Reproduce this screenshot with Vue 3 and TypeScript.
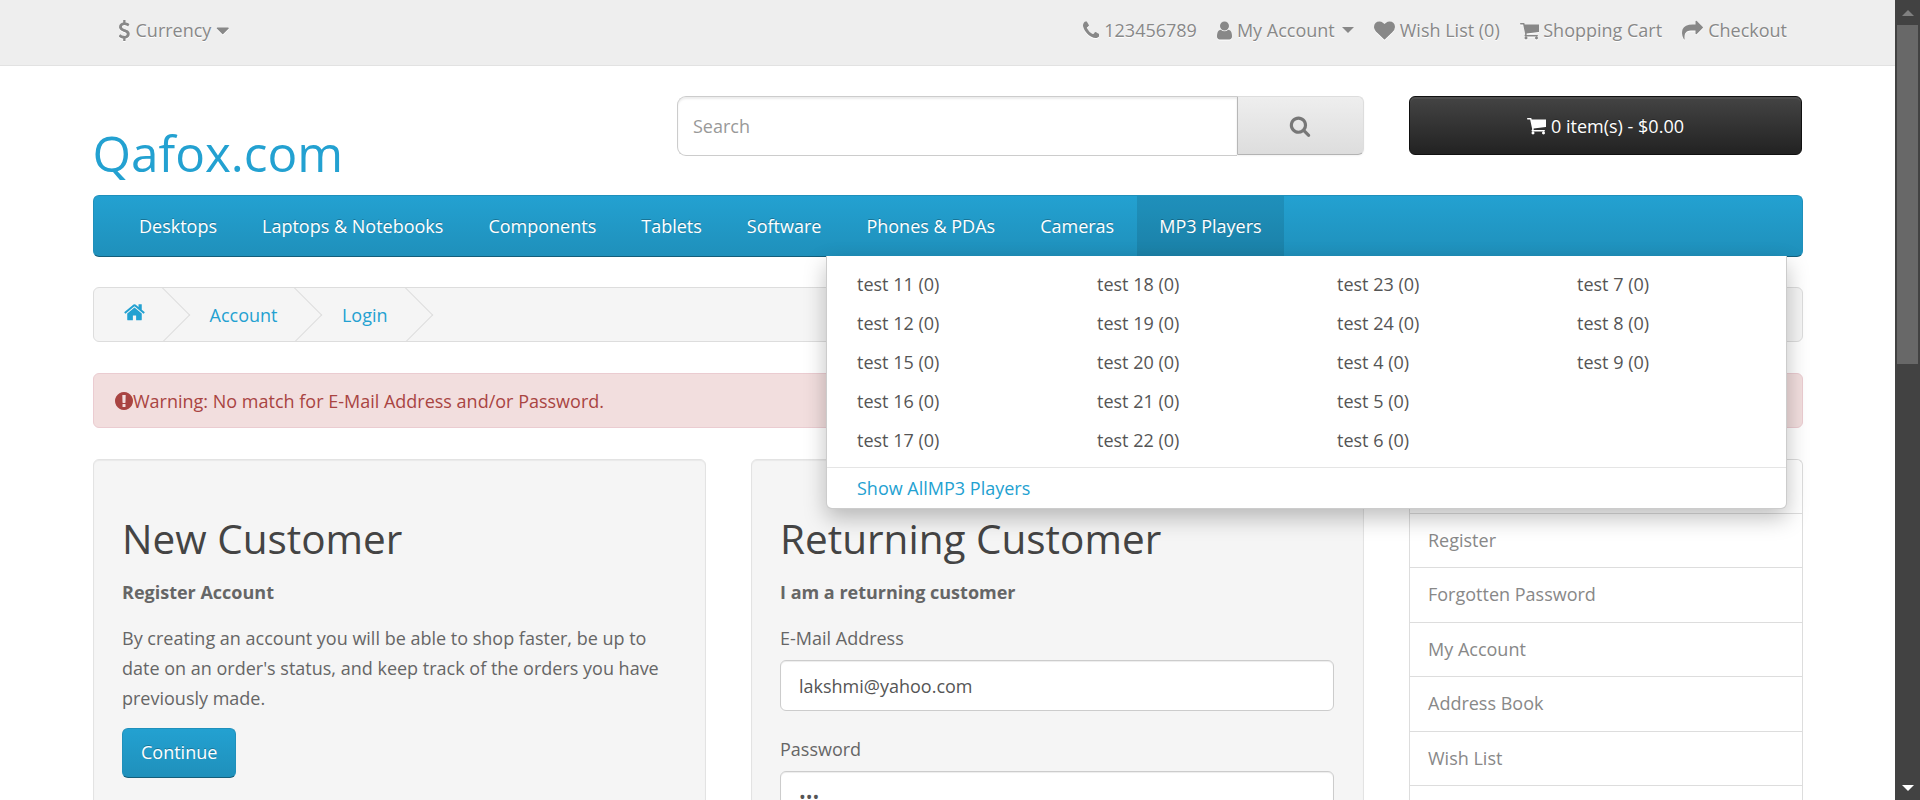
<script setup lang="ts">
const icons: Record<string, string> = {
  usd: 'M1362 1185q0 153-99.5 263.5t-258.5 136.5v175q0 14-9 23t-23 9h-135q-13 0-22.5-9.5t-9.5-22.5v-175q-66-9-127.5-31t-101.5-44.5-74-48-46.5-37.5-17.5-18q-17-21-2-41l103-135q7-10 23-12 15-2 24 9l2 2q113 99 243 125 37 8 74 8 81 0 142.5-43t61.5-122q0-28-15-53t-33.5-42-58.5-37.5-66-32-80-32.5q-39-16-61.5-25t-61.5-26.5-62.5-31-56.5-35.5-53.5-42.5-43.5-49-35.5-58-21-66.5-8.5-78q0-138 98-242t255-134v-180q0-13 9.5-22.5t22.5-9.5h135q14 0 23 9t9 23v176q57 6 110.5 23t87 33.5 63.5 37.5 39 29 15 14q17 18 5 38l-81 146q-8 15-23 16-14 3-27-7-3-3-14.5-12t-39-26.5-58.5-32-74.5-26-85.5-11.5q-95 0-155 43t-60 111q0 26 8.5 48t29.5 41.5 39.5 33 56 31 60.5 27 70 27.5q53 20 81 31.5t76 35 75.5 42.5 62 50 53 63.5 31.5 76.5 13 94z',
  caret: 'M1408 704q0 26-19 45l-448 448q-19 19-45 19t-45-19l-448-448q-19-19-19-45t19-45 45-19h896q26 0 45 19t19 45z',
  phone: 'M1600 1240q0 27-10 70.5t-21 68.5q-21 50-122 106-94 51-186 51-27 0-53-3.5t-57.5-12.5-47-14.5-55.5-20.5-49-18q-98-35-175-83-127-79-264-216t-216-264q-48-77-83-175-3-9-18-49t-20.5-55.5-14.5-47-12.5-57.5-3.5-53q0-92 51-186 56-101 106-122 25-11 68.5-21t70.5-10q14 0 21 3 18 6 53 76 11 19 30 54t35 63.5 31 53.5q3 4 17.5 25t21.5 35.5 7 28.5q0 20-28.5 50t-62 55-62 53-28.5 46q0 9 5 22.5t8.5 20.5 14 24 11.5 19q76 137 174 235t235 174q2 1 19 11.5t24 14 20.5 8.5 22.5 5q18 0 46-28.5t53-62 55-62 50-28.5q14 0 28.5 7t35.5 21.5 25 17.5q25 15 53.5 31t63.5 35 54 30q70 35 76 53 3 7 3 21z',
  user: 'M1536 1399q0 109-62.5 187t-150.5 78h-854q-88 0-150.5-78t-62.5-187q0-85 8.5-160.5t31.5-152 58.5-131 94-89 134.5-34.5q131 128 313 128t313-128q76 0 134.5 34.5t94 89 58.5 131 31.5 152 8.5 160.5zm-256-887q0 159-112.5 271.5t-271.5 112.5-271.5-112.5-112.5-271.5 112.5-271.5 271.5-112.5 271.5 112.5 112.5 271.5z',
  heart: 'M896 1664q-26 0-44-18l-624-602q-10-8-27.5-26t-55.5-65.5-68-97.5-53.5-121-23.5-138q0-220 127-344t351-124q62 0 126.5 21.5t120 58 95.5 68.5 76 68q36-36 76-68t95.5-68.5 120-58 126.5-21.5q224 0 351 124t127 344q0 221-229 450l-623 600q-18 18-44 18z',
  cart: 'M704 1536q0 52-38 90t-90 38-90-38-38-90 38-90 90-38 90 38 38 90zm896 0q0 52-38 90t-90 38-90-38-38-90 38-90 90-38 90 38 38 90zm128-1088v512q0 24-16.5 42.5t-40.5 21.5l-1044 122q13 60 13 70 0 16-24 64h920q26 0 45 19t19 45-19 45-45 19h-1024q-26 0-45-19t-19-45q0-11 8-31.5t16-36 21.5-40 15.5-29.5l-177-823h-204q-26 0-45-19t-19-45 19-45 45-19h256q16 0 28.5 6.5t19.5 15.5 13 24.5 8 26 5.5 29.5 4.5 26h1201q26 0 45 19t19 45z',
  share: 'M1792 640q0 26-19 45l-512 512q-19 19-45 19t-45-19-19-45v-256h-224q-98 0-175.5 6t-154 21.5-133 42.5-105.5 69.5-80 101-48.5 138.5-17.5 181q0 55 5 123 0 6 2.5 23.5t2.5 26.5q0 15-8.5 25t-23.5 10q-16 0-28-17-7-9-13-22t-13.5-30-10.5-24q-127-285-127-451 0-199 53-333 162-403 875-403h224v-256q0-26 19-45t45-19 45 19l512 512q19 19 19 45z',
  search: 'M1216 832q0-185-131.5-316.5t-316.5-131.5-316.5 131.5-131.5 316.5 131.5 316.5 316.5 131.5 316.5-131.5 131.5-316.5zm512 832q0 52-38 90t-90 38q-54 0-90-38l-343-342q-179 124-399 124-143 0-273.5-55.5t-225-150-150-225-55.5-273.5 55.5-273.5 150-225 225-150 273.5-55.5 273.5 55.5 225 150 150 225 55.5 273.5q0 220-124 399l343 343q37 37 37 90z',
  home: 'M1472 992v480q0 26-19 45t-45 19h-384v-384h-256v384h-384q-26 0-45-19t-19-45v-480q0-1 .5-3t.5-3l575-474 575 474q1 2 1 6zm223-69l-62 74q-8 9-21 11h-3q-13 0-21-7l-692-577-692 577q-12 8-24 7-13-2-21-11l-62-74q-8-10-7-23.5t11-21.5l719-599q32-26 76-26t76 26l244 204v-195q0-14 9-23t23-9h192q14 0 23 9t9 23v408l219 182q10 8 11 21.5t-7 23.5z',
  alert: 'M896 128q209 0 385.5 103t279.5 279.5 103 385.5-103 385.5-279.5 279.5-385.5 103-385.5-103-279.5-279.5-103-385.5 103-385.5 279.5-279.5 385.5-103zm128 1247v-190q0-14-9-23.5t-22-9.5h-192q-13 0-23 10t-10 23v190q0 13 10 23t23 10h192q13 0 22-9.5t9-23.5zm-2-344l18-621q0-12-10-18-10-8-24-8h-220q-14 0-24 8-10 6-10 18l17 621q0 10 10 17.5t24 7.5h185q14 0 23.5-7.5t10.5-17.5z'
}

// viewBox trimmed to each glyph's own width, all drawn on the same 21px em
const topLinks = [
  { icon: 'phone', label: '123456789', box: '192 0 1408 1792' },
  { icon: 'user', label: 'My Account', box: '256 0 1280 1792', caret: true },
  { icon: 'heart', label: 'Wish List (0)', box: '0 0 1792 1792' },
  { icon: 'cart', label: 'Shopping Cart', box: '64 0 1664 1792' },
  { icon: 'share', label: 'Checkout', box: '0 0 1792 1792' }
]

const menu = ['Desktops', 'Laptops & Notebooks', 'Components', 'Tablets', 'Software', 'Phones & PDAs', 'Cameras', 'MP3 Players']

const subItems = [11, 12, 15, 16, 17, 18, 19, 20, 21, 22, 23, 24, 4, 5, 6, 7, 8, 9]

const sideLinks = ['Login', 'Register', 'Forgotten Password', 'My Account', 'Address Book', 'Wish List', 'Order History']
</script>

<template>
  <div class="screen">
    <div class="page">
      <nav class="top">
        <div class="top-inner">
          <div class="currency">
            <svg class="ico ico-usd" viewBox="448 0 896 1792"><path :d="icons.usd" /></svg>
            <span>Currency</span>
            <svg class="ico ico-caret" viewBox="320 512 1152 768"><path :d="icons.caret" /></svg>
          </div>
          <ul class="top-links">
            <li v-for="link in topLinks" :key="link.label" :class="['top-link', `top-${link.icon}`]">
              <svg class="ico" :viewBox="link.box"><path :d="icons[link.icon]" /></svg>
              <span>{{ link.label }}</span>
              <span v-if="link.caret" class="small-caret"></span>
            </li>
          </ul>
        </div>
      </nav>

      <main class="container">
        <header class="header">
          <div class="logo">Qafox.com</div>
          <div class="search">
            <input class="search-input" type="text" placeholder="Search" />
            <button class="search-btn" type="button">
              <svg viewBox="0 0 1792 1792"><path :d="icons.search" /></svg>
            </button>
          </div>
          <button class="cart-btn" type="button">
            <svg viewBox="64 0 1664 1792"><path :d="icons.cart" /></svg>
            <span>0 item(s) - $0.00</span>
          </button>
        </header>

        <div class="menu">
          <a v-for="item in menu" :key="item" :class="['menu-item', { active: item === 'MP3 Players' }]">{{ item }}</a>
          <div class="dropdown">
            <div class="dropdown-grid">
              <a v-for="n in subItems" :key="n" class="dropdown-item">test {{ n }} (0)</a>
            </div>
            <a class="see-all">Show AllMP3 Players</a>
          </div>
        </div>

        <ul class="breadcrumb">
          <li>
            <svg class="home" viewBox="64 0 1664 1792"><path :d="icons.home" /></svg>
          </li>
          <li><a>Account</a></li>
          <li><a>Login</a></li>
        </ul>

        <div class="alert">
          <svg viewBox="128 128 1536 1536"><path :d="icons.alert" /></svg>
          <span>Warning: No match for E-Mail Address and/or Password.</span>
        </div>

        <div class="content">
          <section class="well">
            <h2>New Customer</h2>
            <p class="lead"><strong>Register Account</strong></p>
            <p>By creating an account you will be able to shop faster, be up to date on an order's status, and keep track of the orders you have previously made.</p>
            <a class="btn-primary">Continue</a>
          </section>
          <section class="well">
            <h2>Returning Customer</h2>
            <p class="lead"><strong>I am a returning customer</strong></p>
            <div class="form-group">
              <label>E-Mail Address</label>
              <input class="form-control" type="text" value="lakshmi@yahoo.com" />
            </div>
            <div class="form-group">
              <label>Password</label>
              <input class="form-control" type="password" value="abc" />
            </div>
          </section>
          <aside class="list-group">
            <a v-for="link in sideLinks" :key="link" class="list-item">{{ link }}</a>
          </aside>
        </div>
      </main>
    </div>

    <div class="scrollbar">
      <div class="scroll-btn"><span class="arrow-up"></span></div>
      <div class="scroll-track"><div class="scroll-thumb"></div></div>
      <div class="scroll-btn"><span class="arrow-down"></span></div>
    </div>
  </div>
</template>

<style scoped>
* {
  box-sizing: border-box;
}

.screen {
  display: flex;
  width: 1920px;
  height: 800px;
  overflow: hidden;
  font-family: "Open Sans", sans-serif;
  font-size: 18px;
  line-height: 30px;
  color: #666;
}

.page {
  width: 1895px;
  height: 800px;
  overflow: hidden;
  flex: none;
}

svg {
  fill: currentColor;
  display: block;
  flex: none;
}

/* top bar */
.top {
  height: 66px;
  background: #eee;
  border-bottom: 1px solid #e2e2e2;
}

.top-inner {
  display: flex;
  justify-content: space-between;
  align-items: center;
  height: 60px;
  padding: 0 108px 0 119px;
  color: #888;
  text-shadow: 0 1px 0 #fff;
}

.currency,
.top-links,
.top-link {
  display: flex;
  align-items: center;
}

.ico {
  filter: drop-shadow(0 1px 0 #fff);
  width: auto;
  height: 21px;
}

.ico-usd {
  width: 10.5px;
  margin-right: 6px;
}

.ico-caret {
  width: 13.5px;
  height: 9px;
  margin-left: 5px;
}

.small-caret {
  width: 0;
  height: 0;
  margin-left: 2px;
  border-top: 6px solid #888;
  border-left: 6px solid transparent;
  border-right: 6px solid transparent;
}

.top-links {
  list-style: none;
  margin: 0;
  padding: 0;
  gap: 20px;
}

.top-link {
  gap: 5px;
}

.top-phone .ico {
  width: 16.5px;
}

.top-user .ico {
  width: 15px;
}

.top-heart .ico {
  width: 21px;
}

.top-cart {
  gap: 4px;
}

.top-cart .ico {
  width: 19.5px;
}

.top-share .ico {
  width: 21px;
}

/* header */
.container {
  width: 1710px;
  margin-left: 93px;
}

.header {
  display: grid;
  grid-template-columns: 539px 686.5px 393.5px;
  column-gap: 45px;
  height: 129px;
  padding-top: 30px;
}

.logo {
  font-size: 49.5px;
  line-height: 54px;
  color: #23a1d1;
  padding-top: 30px;
  margin-left: -0.5px;
}

.search {
  display: flex;
  height: 60px;
}

.search-input {
  flex: 1;
  min-width: 0;
  height: 60px;
  padding: 0 15px;
  border: 1px solid #ccc;
  border-right: 0;
  border-radius: 9px 0 0 9px;
  box-shadow: inset 0 2px 2px rgba(0, 0, 0, 0.075);
  background: #fff;
  font: 18px "Open Sans", sans-serif;
  color: #555;
  outline: none;
}

.search-input::placeholder {
  color: #999;
}

.search-btn {
  width: 126.5px;
  height: 59px;
  display: flex;
  align-items: center;
  justify-content: center;
  padding: 0;
  border: 1px solid;
  border-color: #ddd #ddd #b3b3b3 #b7b7b7;
  border-radius: 0 6px 6px 0;
  background: linear-gradient(to bottom, #eee, #ddd);
  box-shadow: 0 1px 2px rgba(0, 0, 0, 0.05);
  color: #777;
}

.search-btn svg {
  width: 22px;
  height: 22px;
}

.cart-btn {
  height: 59px;
  display: flex;
  align-items: center;
  justify-content: center;
  gap: 5px;
  padding: 0;
  border: 1px solid #111;
  border-radius: 6px;
  background: linear-gradient(to bottom, #444, #222);
  box-shadow: inset 0 2px 0 rgba(255, 255, 255, 0.06);
  font: 18px "Open Sans", sans-serif;
  color: #fff;
  text-shadow: 0 -1px 0 rgba(0, 0, 0, 0.25);
}

.cart-btn svg {
  width: 19.5px;
  height: 21px;
}

/* main menu */
.menu {
  position: relative;
  display: flex;
  height: 62px;
  padding-left: 22.5px;
  margin-bottom: 30px;
  background: linear-gradient(to bottom, #23a1d1, #1f90bb);
  border: 1px solid;
  border-color: #1f90bb #1f90bb #145e7a;
  border-radius: 6px;
}

.menu-item {
  padding: 0 22.5px;
  line-height: 60px;
  color: #fff;
  text-shadow: 0 -1px 0 rgba(0, 0, 0, 0.25);
}

.menu-item.active {
  background: rgba(0, 0, 0, 0.1);
}

.dropdown {
  position: absolute;
  top: 60px;
  left: 732px;
  width: 961px;
  height: 253px;
  background: #fff;
  border: 1px solid rgba(0, 0, 0, 0.2);
  border-top: 0;
  border-radius: 0 0 6px 6px;
  box-shadow: 0 9px 22px rgba(0, 0, 0, 0.25);
  z-index: 5;
}

.dropdown-grid {
  display: grid;
  grid-template-columns: repeat(4, 240px);
  grid-template-rows: repeat(5, 39px);
  grid-auto-flow: column;
  padding: 8.5px 0 8px;
  height: 212px;
  border-bottom: 1px solid #e5e5e5;
}

.dropdown-item {
  padding-left: 30px;
  line-height: 39px;
  color: #555;
}

.see-all {
  display: block;
  padding-left: 30px;
  line-height: 40px;
  color: #23a1d1;
}

/* breadcrumb */
.breadcrumb {
  display: flex;
  height: 55px;
  margin: 0 0 31px;
  padding: 0;
  list-style: none;
  overflow: hidden;
  background: #f5f5f5;
  border: 1px solid #ddd;
  border-radius: 6px;
}

.breadcrumb li {
  position: relative;
  display: flex;
  align-items: center;
  height: 53px;
  padding: 0 30px;
  margin-right: 4.5px;
  color: #23a1d1;
}

.breadcrumb li::after {
  content: '';
  position: absolute;
  top: 7px;
  right: -7px;
  width: 39px;
  height: 39px;
  border-right: 1px solid #ddd;
  border-bottom: 1px solid #ddd;
  transform: rotate(-45deg);
}

.home {
  width: 21px;
  height: 22.6px;
  margin-top: -5px;
}

/* alert */
.alert {
  display: flex;
  align-items: center;
  height: 55px;
  margin-bottom: 31px;
  padding: 0 21px;
  color: #a94442;
  background: #f2dede;
  border: 1px solid #ebccd1;
  border-radius: 6px;
}

.alert svg {
  width: 18px;
  height: 18px;
}

/* content */
.content {
  display: grid;
  grid-template-columns: 613px 613px 394px;
  column-gap: 45px;
  align-items: start;
}

.well {
  height: 600px;
  padding: 29px 29px 29px 28px;
  background: #f5f5f5;
  border: 1px solid #e3e3e3;
  border-radius: 6px;
  box-shadow: inset 0 1px 1px rgba(0, 0, 0, 0.05);
}

h2 {
  margin: 27px 0 16px;
  font-size: 40.5px;
  font-weight: 400;
  line-height: 45px;
  color: #444;
}

p {
  margin: 0 0 15px;
}

.lead {
  margin-bottom: 16px;
}

strong {
  font-weight: 700;
}

.btn-primary {
  display: inline-block;
  padding: 8px 18px 10px;
  color: #fff;
  text-shadow: 0 -1px 0 rgba(0, 0, 0, 0.25);
  background: linear-gradient(to bottom, #23a1d1, #1f90bb);
  border: 1px solid;
  border-color: #1f90bb #1f90bb #145e7a;
  border-radius: 6px;
  line-height: 30px;
}

.form-group {
  margin-bottom: 23px;
}

label {
  display: block;
  margin-bottom: 7px;
}

.form-control {
  display: block;
  width: 100%;
  height: 51px;
  padding: 0 18px;
  background: #fff;
  border: 1px solid #ccc;
  border-radius: 6px;
  box-shadow: inset 0 1px 1px rgba(0, 0, 0, 0.075);
  font: 18px "Open Sans", sans-serif;
  color: #555;
  outline: none;
}

.list-group {
  display: flex;
  flex-direction: column;
  border: 1px solid #ddd;
  border-bottom: 0;
  border-radius: 6px 6px 0 0;
  background: #fff;
}

.list-item {
  height: 54.5px;
  padding-left: 18px;
  line-height: 53px;
  color: #888;
  border-bottom: 1px solid #ddd;
}

.list-item:first-child {
  height: 53.5px;
}

/* scrollbar */
.scrollbar {
  width: 25px;
  height: 800px;
  flex: none;
  display: flex;
  flex-direction: column;
  background: #424242;
}

.scroll-btn {
  height: 25px;
  flex: none;
  display: flex;
  align-items: center;
  justify-content: center;
}

.arrow-up,
.arrow-down {
  width: 0;
  height: 0;
  border-left: 6px solid transparent;
  border-right: 6px solid transparent;
}

.arrow-up {
  border-bottom: 6px solid #808080;
}

.arrow-down {
  border-top: 6px solid #fff;
}

.scroll-track {
  flex: 1;
  padding: 0 2px 0 2px;
}

.scroll-thumb {
  height: 339px;
  background: #686868;
}
</style>

<style>
html,
body {
  margin: 0;
  overflow: hidden;
}
</style>
